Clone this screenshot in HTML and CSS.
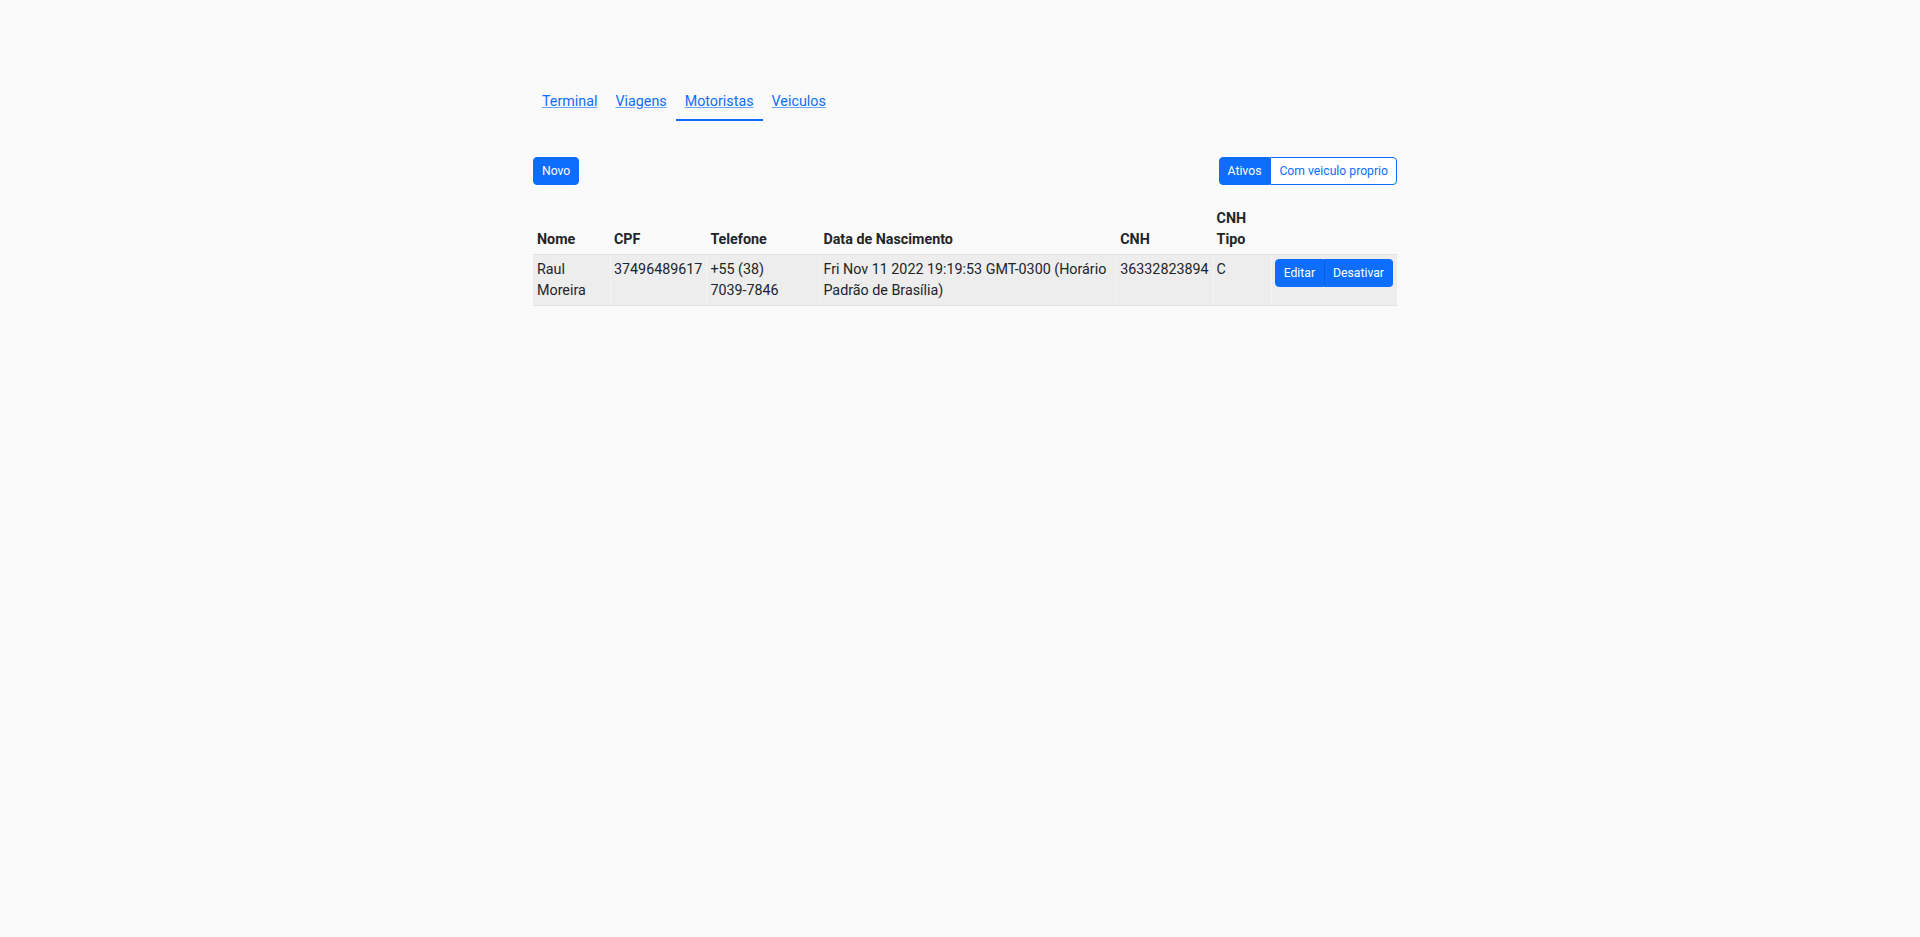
FILE: index.html
```html
<!DOCTYPE html>
<html lang="pt-BR">
<head>
    <meta charset="UTF-8">
    <meta name="viewport" content="width=device-width, initial-scale=1.0">
    <title>Motoristas</title>
    <link rel="stylesheet" href="styles.css">
</head>
<body>
    <div class="page">
        <!-- Tabs -->
        <nav class="tabs">
            <a href="#" class="tab">Terminal</a>
            <a href="#" class="tab">Viagens</a>
            <a href="#" class="tab active">Motoristas</a>
            <a href="#" class="tab">Veiculos</a>
        </nav>

        <!-- Toolbar -->
        <div class="toolbar">
            <button class="btn btn-primary">Novo</button>
            <div class="btn-group">
                <button class="btn btn-primary">Ativos</button>
                <button class="btn btn-outline">Com veiculo proprio</button>
            </div>
        </div>

        <!-- Drivers table -->
        <table class="drivers">
            <thead>
                <tr>
                    <th>Nome</th>
                    <th>CPF</th>
                    <th>Telefone</th>
                    <th>Data de Nascimento</th>
                    <th>CNH</th>
                    <th>CNH Tipo</th>
                    <th></th>
                </tr>
            </thead>
            <tbody>
                <tr>
                    <td>Raul Moreira</td>
                    <td>37496489617</td>
                    <td>+55 (38) <span class="nowrap">7039-7846</span></td>
                    <td>Fri Nov 11 2022 19:19:53 GMT-0300 (Horário Padrão de Brasília)</td>
                    <td>36332823894</td>
                    <td>C</td>
                    <td class="actions">
                        <div class="btn-group">
                            <button class="btn btn-primary">Editar</button>
                            <button class="btn btn-primary">Desativar</button>
                        </div>
                    </td>
                </tr>
            </tbody>
        </table>
    </div>
</body>
</html>
```

FILE: styles.css
```css
:root {
    --page-bg: #fafafa;
    --text: #212529;
    --primary: #0d6efd;
    --primary-dark: #0b5ed7;
    --border: #dee2e6;
    --stripe: #ededed;
}

* {
    box-sizing: border-box;
}

body {
    margin: 0;
    background: var(--page-bg);
    color: var(--text);
    font-family: Roboto, "Liberation Sans", sans-serif;
    font-size: 14.3px;
    line-height: 21px;
}

.page {
    width: 864px;
    margin-left: calc(50% - 427px);
}

.nowrap {
    white-space: nowrap;
}

/* Tabs */
.tabs {
    display: flex;
    margin-top: 83px;
}

.tab {
    padding: 8px 9px 7px;
    color: var(--primary);
    text-decoration: underline;
    text-decoration-color: rgba(13, 110, 253, 0.6);
    border-bottom: 2px solid transparent;
}

.tab.active {
    border-bottom-color: var(--primary);
}

/* Toolbar */
.toolbar {
    display: flex;
    justify-content: space-between;
    align-items: center;
    margin-top: 36px;
}

.btn {
    font-family: inherit;
    font-size: 12.2px;
    line-height: 18px;
    padding: 4px 8px;
    border: 1px solid var(--primary);
    border-radius: 4px;
    cursor: pointer;
}

.btn-primary {
    background: var(--primary);
    color: #fff;
}

.btn-outline {
    background: #fff;
    color: var(--primary);
}

.btn-group {
    display: inline-flex;
}

.btn-group .btn {
    border-radius: 0;
}

.btn-group .btn:first-child {
    border-radius: 4px 0 0 4px;
}

.btn-group .btn:last-child {
    border-radius: 0 4px 4px 0;
    border-left-color: var(--primary-dark);
}

.btn-group .btn-outline:last-child {
    border-left-color: var(--primary);
}

/* Table */
.drivers {
    width: 100%;
    margin-top: 19px;
    border-collapse: collapse;
}

.drivers th,
.drivers td {
    padding: 4px;
    text-align: left;
}

.drivers th {
    font-weight: 700;
    vertical-align: bottom;
    border-bottom: 1px solid var(--border);
}

.drivers td {
    vertical-align: top;
    background: var(--stripe);
    border-bottom: 1px solid var(--border);
}

.drivers td + td {
    box-shadow: inset 1px 0 0 #f4f4f4;
}

.drivers .actions {
    white-space: nowrap;
    width: 1%;
}
```
